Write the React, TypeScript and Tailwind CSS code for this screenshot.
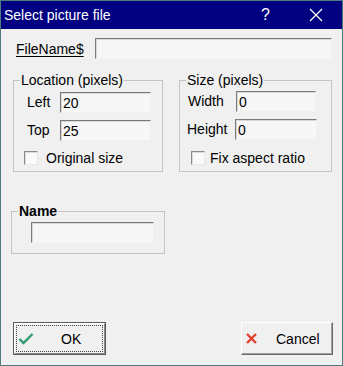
import React from "react";

const inputCls =
  "h-[21px] bg-[#f7f7f7] border-t border-l border-t-[#7a7a7a] border-l-[#7a7a7a] border-b border-r border-b-[#f0f0f0] border-r-[#f0f0f0] shadow-[inset_1px_1px_#d8d8d8] px-[2px] flex items-center text-[14px] leading-none text-black";

function Check() {
  return (
    <div className="w-[14px] h-[14px] bg-[#fafafa] border-t border-l border-t-[#8a8a8a] border-l-[#8a8a8a] border-b border-r border-b-[#e8e8e8] border-r-[#e8e8e8] shadow-[inset_1px_1px_#dcdcdc]" />
  );
}

export default function App() {
  return (
    <div className="w-[343px] h-[366px] border border-[#4e7b7b] bg-[#f0f0f0] flex flex-col font-['Liberation_Sans',Arial,sans-serif] text-[14px] text-black overflow-hidden">
      {/* title bar */}
      <div className="h-[28px] bg-[#000080] flex items-center text-white pl-[3px] shrink-0">
        <span className="text-[14px] leading-none">Select picture file</span>
        <span className="ml-auto mr-[39px] text-[16px] leading-none">?</span>
        <svg width="14" height="14" viewBox="0 0 14 14" className="mr-[19px]">
          <path d="M1 1 L13 13 M13 1 L1 13" stroke="white" strokeWidth="1.3" />
        </svg>
      </div>

      {/* body */}
      <div className="flex flex-col">
        <div className="mt-[9px] flex items-center">
          <span className="ml-[15px] w-[79px] underline underline-offset-2 leading-none">FileName$</span>
          <div className={inputCls + " w-[237px]"} />
        </div>

        <div className="mt-[13px] flex ml-[12px] gap-[16px]">
          <fieldset className="w-[150px] border border-[#c4c4c4] pb-[6px]">
            <legend className="ml-[6px] px-[1px] leading-[16px]">Location (pixels)</legend>
            <div className="mt-[4px] flex flex-col gap-[7px]">
              <div className="flex items-center">
                <span className="ml-[13px] w-[33px]">Left</span>
                <div className={inputCls + " w-[91px]"}>20</div>
              </div>
              <div className="flex items-center">
                <span className="ml-[13px] w-[33px]">Top</span>
                <div className={inputCls + " w-[91px]"}>25</div>
              </div>
            </div>
            <div className="mt-[10px] flex items-center ml-[10px] gap-[8px]">
              <Check />
              <span className="leading-none">Original size</span>
            </div>
          </fieldset>

          <fieldset className="w-[153px] border border-[#c4c4c4] pb-[6px]">
            <legend className="ml-[6px] px-[1px] leading-[16px]">Size (pixels)</legend>
            <div className="mt-[3px] flex flex-col gap-[7px]">
              <div className="flex items-center">
                <span className="ml-[8px] w-[48px]">Width</span>
                <div className={inputCls + " w-[80px]"}>0</div>
              </div>
              <div className="flex items-center">
                <span className="ml-[7px] w-[48px]">Height</span>
                <div className={inputCls + " w-[82px]"}>0</div>
              </div>
            </div>
            <div className="mt-[11px] flex items-center ml-[11px] gap-[5px]">
              <Check />
              <span className="leading-none">Fix aspect ratio</span>
            </div>
          </fieldset>
        </div>

        <fieldset className="mt-[31px] ml-[10px] w-[154px] border border-[#c4c4c4] pb-[10px]">
          <legend className="ml-[6px] px-[1px] leading-[16px] font-bold">Name</legend>
          <div className={inputCls + " mt-[3px] ml-[19px] w-[123px]"} />
        </fieldset>

        <div className="mt-[68px] flex justify-between pl-[12px] pr-[9px]">
          <div className="w-[93px] h-[33px] border border-[#5a5a5a] p-0">
            <div className="w-full h-full border border-t-white border-l-white border-r-[#8a8a8a] border-b-[#8a8a8a] p-[1px]">
              <div className="w-full h-full border border-dotted border-[#444] flex items-center relative">
                <svg width="16" height="12" viewBox="0 0 16 12" className="ml-[1px]">
                  <path d="M1.5 6 L5.5 10 L14.5 1" stroke="#2f9a6e" strokeWidth="2.4" fill="none" />
                </svg>
                <span className="ml-[27px] leading-none">OK</span>
              </div>
            </div>
          </div>
          <div className="w-[92px] h-[33px] border border-t-white border-l-white border-r-[#696969] border-b-[#696969] shadow-[inset_-1px_-1px_#a0a0a0] flex items-center">
            <svg width="11" height="11" viewBox="0 0 11 11" className="ml-[4px]">
              <path d="M1 1 L10 10 M10 1 L1 10" stroke="#e2402f" strokeWidth="2.4" />
            </svg>
            <span className="ml-[19px] leading-none">Cancel</span>
          </div>
        </div>
      </div>
    </div>
  );
}
